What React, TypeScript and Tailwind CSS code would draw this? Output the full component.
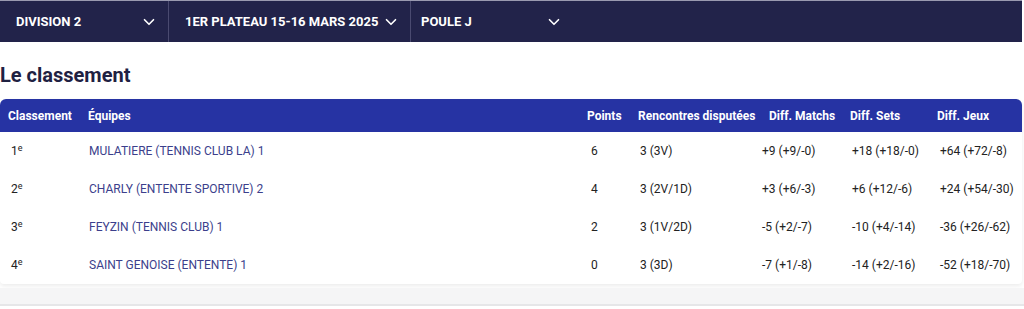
import React from 'react';
import { ChevronDown } from 'lucide-react';

const rows = [
  { rank: '1', team: 'MULATIERE (TENNIS CLUB LA) 1', pts: '6', renc: '3 (3V)', m: '+9 (+9/-0)', s: '+18 (+18/-0)', j: '+64 (+72/-8)' },
  { rank: '2', team: 'CHARLY (ENTENTE SPORTIVE) 2', pts: '4', renc: '3 (2V/1D)', m: '+3 (+6/-3)', s: '+6 (+12/-6)', j: '+24 (+54/-30)' },
  { rank: '3', team: 'FEYZIN (TENNIS CLUB) 1', pts: '2', renc: '3 (1V/2D)', m: '-5 (+2/-7)', s: '-10 (+4/-14)', j: '-36 (+26/-62)' },
  { rank: '4', team: 'SAINT GENOISE (ENTENTE) 1', pts: '0', renc: '3 (3D)', m: '-7 (+1/-8)', s: '-14 (+2/-16)', j: '-52 (+18/-70)' },
];

const cols = 'grid grid-cols-[80px_499px_51px_131px_81px_87px_1fr]';

function Select({ label, width }: { label: string; width: string }) {
  return (
    <div className={`${width} h-full flex items-center justify-between border-r border-[#4a4a70] pl-4 pr-[10px]`}>
      <span className="text-[13px] font-bold text-white">{label}</span>
      <ChevronDown size={18} strokeWidth={2.2} className="text-white" />
    </div>
  );
}

export default function App() {
  return (
    <div className="w-[1024px] h-[309px] bg-white overflow-hidden" style={{ fontFamily: 'Roboto, "Liberation Sans", sans-serif' }}>
      {/* barre des filtres */}
      <div className="h-[42px] mr-[2px] bg-[#22234a] border-t border-[#9a9ab0] flex">
        <Select label="DIVISION 2" width="w-[169px]" />
        <Select label="1ER PLATEAU 15-16 MARS 2025" width="w-[242px]" />
        <div className="w-[160px] h-full flex items-center justify-between pl-[10px] pr-[8px]">
          <span className="text-[13px] font-bold text-white">POULE J</span>
          <ChevronDown size={18} strokeWidth={2.2} className="text-white" />
        </div>
      </div>

      <h2 className="mt-[21px] text-[20px] leading-[24px] font-bold text-[#1f2142]">Le classement</h2>

      {/* tableau */}
      <div className="mt-[12px] mr-[2px] rounded-t-[6px] rounded-b-[4px] bg-white shadow-[0_2px_4px_rgba(0,0,0,0.08)]">
        <div className={`${cols} h-[33px] items-center bg-[#2633a3] rounded-t-[6px] text-[12px] font-bold text-white`}>
          <div className="pl-2">Classement</div>
          <div className="pl-2">Équipes</div>
          <div className="pl-2">Points</div>
          <div className="pl-2">Rencontres disputées</div>
          <div className="pl-2">Diff. Matchs</div>
          <div className="pl-2">Diff. Sets</div>
          <div className="pl-2">Diff. Jeux</div>
        </div>
        {rows.map((r) => (
          <div key={r.rank} className={`${cols} h-[38px] items-center text-[12px] text-[#222]`}>
            <div className="pl-[11px]">
              {r.rank}
              <sup className="text-[9px]">e</sup>
            </div>
            <div className="pl-[9px] text-[#3c3f8c]">{r.team}</div>
            <div className="pl-[12px]">{r.pts}</div>
            <div className="pl-[10px]">{r.renc}</div>
            <div className="pl-[1px]">{r.m}</div>
            <div className="pl-[10px]">{r.s}</div>
            <div className="pl-[11px]">{r.j}</div>
          </div>
        ))}
      </div>

      <div className="mt-[4px] h-[18px] bg-[#f5f5f6] border-b-2 border-[#e6e6e8]" />
    </div>
  );
}
